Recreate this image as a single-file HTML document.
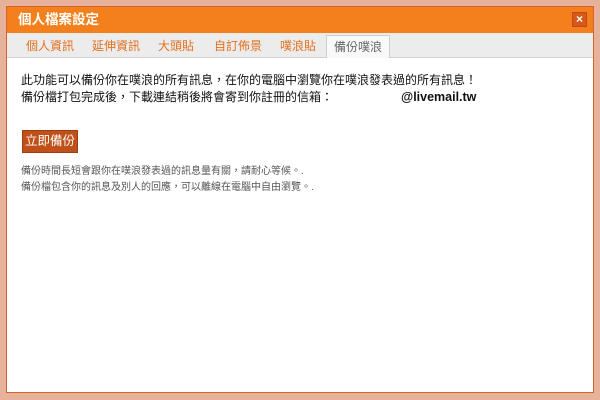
<!DOCTYPE html>
<html><head><meta charset="utf-8"><style>
*{margin:0;padding:0;box-sizing:border-box}
body{width:600px;height:400px;background:#e6b29c;position:relative;overflow:hidden;font-family:"Liberation Sans","Noto Sans CJK TC",sans-serif}
.dlg{position:absolute;left:6px;top:6px;width:588px;height:387px;border:1px solid #d4622a;background:#fff}
.title{position:absolute;left:0;top:0;width:100%;height:26px;background:#f3801c;color:#fff;font-weight:bold;font-size:13.5px;line-height:26px;padding-left:11px}
.close{position:absolute;right:6px;top:5px;width:15px;height:15px;background:#d8581a;border:1px solid #c04c14;color:#fff;font-size:12px;line-height:13px;text-align:center;font-weight:bold}
.tabs{position:absolute;left:0;top:26px;width:100%;height:25px;background:#ececec;border-bottom:1px solid #cfcfcf}
.tab{position:absolute;top:5px;font-size:12px;color:#e2701e;line-height:17px}
.tab.act{top:2px;height:23px;background:#f9f9f9;border:1px solid #cfcfcf;border-bottom:none;color:#666;padding:3px 7px 0}
.p{position:absolute;left:14px;font-size:12px;color:#111;line-height:17px}
.btn{position:absolute;left:15px;top:123px;width:56px;height:23px;background:#c0501a;border:1px solid #9d3d10;color:#fff;font-size:12.5px;line-height:21px;text-align:center}
.s{position:absolute;left:14px;font-size:10px;color:#555;line-height:14px}
</style></head><body>
<div class="dlg">
<div class="title">個人檔案設定<div class="close">×</div></div>
<div class="tabs">
<span class="tab" style="left:19px">個人資訊</span>
<span class="tab" style="left:85px">延伸資訊</span>
<span class="tab" style="left:151px">大頭貼</span>
<span class="tab" style="left:207px">自訂佈景</span>
<span class="tab" style="left:273px">噗浪貼</span>
<span class="tab act" style="left:319px">備份噗浪</span>
</div>
<div class="p" style="top:65px">此功能可以備份你在噗浪的所有訊息，在你的電腦中瀏覽你在噗浪發表過的所有訊息！</div>
<div class="p" style="top:82px">備份檔打包完成後，下載連結稍後將會寄到你註冊的信箱：<b style="position:absolute;left:380px;white-space:nowrap;font-size:12.5px">@livemail.tw</b></div>
<div class="btn">立即備份</div>
<div class="s" style="top:158px">備份時間長短會跟你在噗浪發表過的訊息量有關，請耐心等候。.</div>
<div class="s" style="top:174px">備份檔包含你的訊息及別人的回應，可以離線在電腦中自由瀏覽。.</div>
</div>
</body></html>
